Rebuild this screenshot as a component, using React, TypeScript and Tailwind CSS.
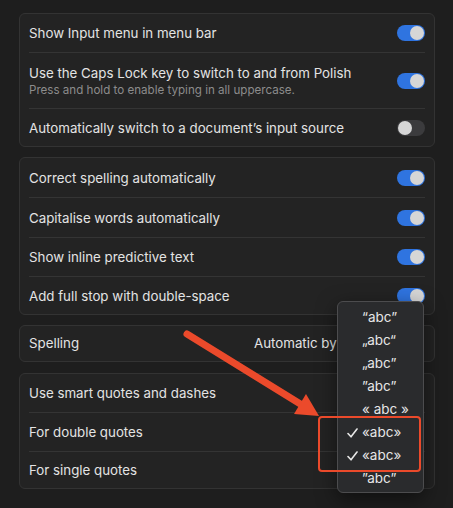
import React from "react";

function Toggle({ on }: { on: boolean }) {
  return (
    <div
      className={
        "relative h-[16px] w-[28px] shrink-0 rounded-full " +
        (on ? "bg-[#2f74e0]" : "bg-[#3b3b3d]")
      }
    >
      <div
        className={
          "absolute top-[1px] h-[14px] w-[14px] rounded-full bg-[#d6d6d6] " +
          (on ? "right-[1px]" : "left-[1px]")
        }
      />
    </div>
  );
}

function Row({
  title,
  sub,
  on,
  h = "h-[38px]",
}: {
  title: string;
  sub?: string;
  on?: boolean;
  h?: string;
}) {
  return (
    <div className={"flex items-center justify-between " + h}>
      <div className="flex flex-col">
        <span className="text-[13.3px] leading-[16px] text-[#e3e3e3]">{title}</span>
        {sub && (
          <span className="mt-[2px] text-[11.6px] leading-[14px] text-[#8c8c8c]">{sub}</span>
        )}
      </div>
      {on !== undefined && <Toggle on={on} />}
    </div>
  );
}

function Divider() {
  return <div className="h-px bg-[#343434]" />;
}

function Card({ children }: { children: React.ReactNode }) {
  return (
    <div className="rounded-[6px] border border-[#333333] bg-[#232323] px-[9px]">{children}</div>
  );
}

const items: { t: string; c?: boolean }[] = [
  { t: "\u201Cabc\u201D" },
  { t: "\u201Eabc\u201C" },
  { t: "\u201Eabc\u201D" },
  { t: "\u201Dabc\u201D" },
  { t: "\u00AB abc \u00BB" },
  { t: "\u00ABabc\u00BB", c: true },
  { t: "\u00ABabc\u00BB", c: true },
  { t: "\u201Dabc\u201D" },
];

export default function App() {
  return (
    <div
      className="relative h-[508px] w-[453px] overflow-hidden bg-[#1e1e1e]"
      style={{ fontFamily: "Inter, 'Noto Sans', sans-serif" }}
    >
      <div className="flex flex-col pl-[19px] pr-[18px] pt-[13px]">
        <Card>
          <Row title="Show Input menu in menu bar" on={true} />
          <Divider />
          <Row
            title="Use the Caps Lock key to switch to and from Polish"
            sub="Press and hold to enable typing in all uppercase."
            on={true}
            h="h-[55px]"
          />
          <Divider />
          <Row title={"Automatically switch to a document\u2019s input source"} on={false} h="h-[37px]" />
        </Card>
        <div className="mt-[10px]">
          <Card>
            <Row title="Correct spelling automatically" on={true} h="h-[39px]" />
            <Divider />
            <Row title="Capitalise words automatically" on={true} h="h-[39px]" />
            <Divider />
            <Row title="Show inline predictive text" on={true} />
            <Divider />
            <Row title="Add full stop with double-space" on={true} h="h-[37px]" />
          </Card>
        </div>
        <div className="mt-[10px]">
          <Card>
            <div className="flex h-[35px] items-center justify-between">
              <span className="text-[13.3px] text-[#e3e3e3]">Spelling</span>
              <span className="mr-[88px] w-[83px] overflow-hidden whitespace-nowrap text-[13.3px] text-[#e3e3e3]">
                Automatic by Language
              </span>
            </div>
          </Card>
        </div>
        <div className="mt-[11px]">
          <Card>
            <Row title="Use smart quotes and dashes" />
            <Divider />
            <Row title="For double quotes" />
            <Divider />
            <Row title="For single quotes" h="h-[36px]" />
          </Card>
        </div>
      </div>

      {/* popup menu */}
      <div className="absolute left-[337px] top-[301px] h-[192px] w-[87px] overflow-hidden rounded-[6px] border border-[#4c4c4e] bg-[#2a2b2d] py-[4px] shadow-[0_6px_20px_rgba(0,0,0,0.5)]">
        {items.map((it, i) => (
          <div key={i} className="relative flex h-[23px] items-center pl-[24px]">
            {it.c && (
              <svg
                className="absolute left-[9px] top-[7px]"
                width="11"
                height="10"
                viewBox="0 0 11 10"
              >
                <polyline
                  points="1,5.5 4,8.8 10,1"
                  fill="none"
                  stroke="#e6e6e6"
                  strokeWidth="1.6"
                  strokeLinecap="round"
                  strokeLinejoin="round"
                />
              </svg>
            )}
            <span className="text-[13.5px] text-[#e6e6e6]">{it.t}</span>
          </div>
        ))}
      </div>

      {/* red highlight box */}
      <div className="absolute left-[318px] top-[416px] h-[56px] w-[103px] rounded-[4px] border-[2.5px] border-[#eb4a2b]" />

      {/* arrow */}
      <svg className="absolute left-0 top-0" width="453" height="508" viewBox="0 0 453 508">
        <line
          x1="187"
          y1="334"
          x2="302"
          y2="405"
          stroke="#eb4a2b"
          strokeWidth="7"
          strokeLinecap="round"
        />
        <polygon points="319,416 294,414 306,394" fill="#eb4a2b" />
      </svg>
    </div>
  );
}
